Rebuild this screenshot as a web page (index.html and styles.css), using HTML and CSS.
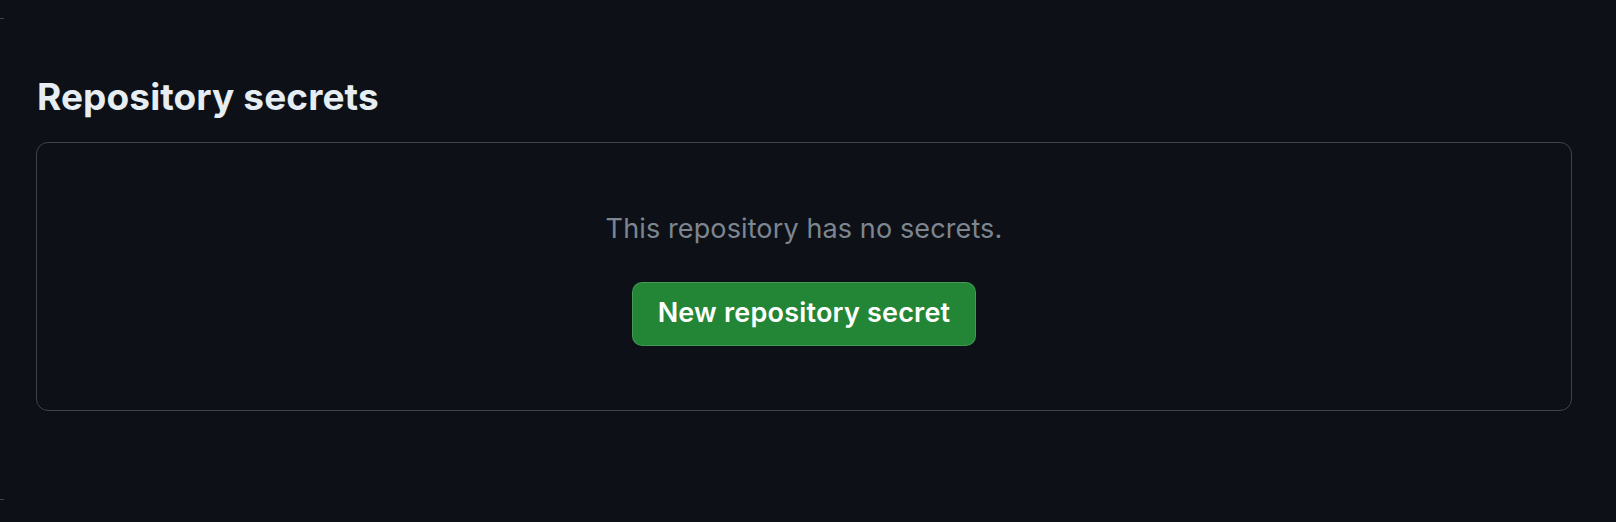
FILE: index.html
```html
<!DOCTYPE html>
<html lang="en">
<head>
<meta charset="utf-8">
<title>Repository secrets</title>
<link rel="stylesheet" href="styles.css">
</head>
<body>
<div class="edge-mark edge-mark-top"></div>
<main class="page">
  <h2 class="section-title">Repository secrets</h2>
  <div class="blankslate">
    <p class="blankslate-text">This repository has no secrets.</p>
    <button class="btn-primary" type="button">New repository secret</button>
  </div>
</main>
<div class="edge-mark edge-mark-bottom"></div>
</body>
</html>
```

FILE: styles.css
```css
html, body {
  margin: 0;
  padding: 0;
  background: #0d1117;
}

body {
  width: 1616px;
  height: 522px;
  overflow: hidden;
  font-family: Inter, "Noto Sans", "Liberation Sans", sans-serif;
  color: #e6edf3;
}

.edge-mark {
  width: 4px;
  height: 1px;
  background: #3d444d;
}

.edge-mark-top {
  margin-top: 18px;
}

.edge-mark-bottom {
  margin-top: 88px;
}

.page {
  padding: 56px 44px 0 36px;
}

.section-title {
  margin: 0 0 23px 1px;
  font-size: 37px;
  line-height: 44px;
  font-weight: 700;
  letter-spacing: 0.1px;
  color: #e6edf3;
}

.blankslate {
  display: flex;
  flex-direction: column;
  align-items: center;
  border: 1px solid #3d444d;
  border-radius: 12px;
  padding-top: 68px;
  box-sizing: border-box;
  height: 269px;
}

.blankslate-text {
  margin: 0 0 35px;
  font-size: 27px;
  line-height: 36px;
  letter-spacing: 0.12px;
  color: #7d8590;
}

.btn-primary {
  width: 344px;
  height: 64px;
  border: 1px solid rgba(255, 255, 255, 0.15);
  border-radius: 10px;
  background: #238636;
  color: #ffffff;
  font-family: inherit;
  font-size: 27px;
  font-weight: 600;
  letter-spacing: 0.2px;
  padding: 0 0 4px;
}
```
